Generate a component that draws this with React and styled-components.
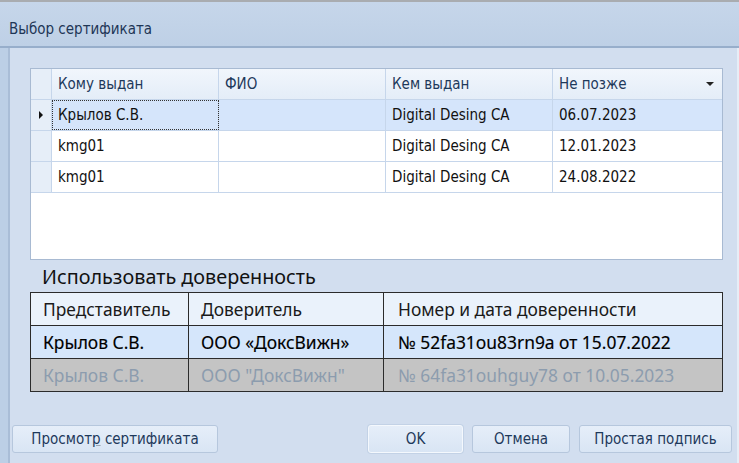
import React from "react";
import styled, { createGlobalStyle, css } from "styled-components";

const Global = createGlobalStyle`
  html, body { margin: 0; padding: 0; }
  body { width: 739px; height: 463px; overflow: hidden; background: #d2deef; }
  * { box-sizing: border-box; }
`;

const Window = styled.div`
  width: 739px;
  height: 463px;
  display: flex;
  flex-direction: column;
  background: #d2deef;
  font-family: "DejaVu Sans Condensed", "DejaVu Sans", sans-serif;
`;

const TopLine = styled.div`
  height: 2px;
  background: #a9acb0;
`;

const TitleBar = styled.div`
  height: 46px;
  flex-shrink: 0;
  display: flex;
  align-items: center;
  padding-left: 9px;
  padding-top: 10px;
  background: linear-gradient(#c6d6ea, #bed0e6);
  border-bottom: 2px solid #97aecb;
  font-size: 15px;
  color: #1e3656;
`;

const Body = styled.div`
  flex: 1;
  display: flex;
  min-width: 0;
`;

const LeftFrame = styled.div`
  flex: 0 0 10px;
  background: #bccfe6;
  border-right: 2px solid #a9bdd7;
`;

const Content = styled.div`
  flex: 1;
  min-width: 0;
  display: flex;
  flex-direction: column;
  padding: 20px 14px 0 20px;
  border-right: 2px solid #e6edf6;
`;

const Grid = styled.div`
  height: 192px;
  background: #fff;
  border: 1px solid #a8bad2;
  display: flex;
  flex-direction: column;
`;

const cols1 = "21px 167px 167px 167px 1fr";

const GridRow = styled.div`
  display: grid;
  grid-template-columns: ${cols1};
  height: 31px;
  flex-shrink: 0;
  background: ${(p) => (p.$head ? "linear-gradient(#f1f6fc, #e4edf8)" : p.$sel ? "#d5e5fb" : "#fff")};
  border-bottom: 1px solid #c6d6eb;
`;

const GridCell = styled.div`
  display: flex;
  align-items: center;
  padding-left: ${(p) => (p.$ind ? "0" : "6px")};
  justify-content: ${(p) => (p.$ind ? "center" : "flex-start")};
  border-right: 1px solid #c6d6eb;
  font-size: 15px;
  white-space: nowrap;
  color: ${(p) => (p.$head ? "#1e395b" : "#111")};
  background: ${(p) => (p.$ind ? "#e6eef8" : "transparent")};
  position: relative;
  ${(p) =>
    p.$focus &&
    css`
      outline: 1px dotted #333;
      outline-offset: -1px;
    `}
  &:last-child { border-right: none; }
`;

const SortArrow = styled.span`
  position: absolute;
  right: 8px;
  top: 13px;
  width: 0;
  height: 0;
  border-left: 4px solid transparent;
  border-right: 4px solid transparent;
  border-top: 4px solid #222;
`;

const RowMark = styled.span`
  width: 0;
  height: 0;
  border-top: 4px solid transparent;
  border-bottom: 4px solid transparent;
  border-left: 4px solid #111;
`;

const Caption = styled.div`
  font-family: "Noto Sans", sans-serif;
  font-size: 19.8px;
  color: #111;
  height: 32px;
  flex-shrink: 0;
  display: flex;
  align-items: center;
  padding-left: 12px;
`;

const cols2 = "158px 195px 1fr";

const Table2 = styled.div`
  border: 1px solid #2b2b2b;
  font-family: "Noto Sans", sans-serif;
  display: flex;
  flex-direction: column;
`;

const T2Row = styled.div`
  display: grid;
  grid-template-columns: ${cols2};
  height: ${(p) => p.$h}px;
  background: ${(p) => (p.$kind === "head" ? "#eaf2fb" : p.$kind === "sel" ? "#d5e6fb" : "#c4c4c4")};
  border-bottom: 1px solid #2b2b2b;
  &:last-child { border-bottom: none; }
`;

const T2Cell = styled.div`
  display: flex;
  align-items: center;
  padding-left: 12px;
  border-right: 1px solid #2b2b2b;
  font-size: 17.4px;
  color: ${(p) => (p.$kind === "dis" ? "#8c9cae" : p.$kind === "sel" ? "#000" : "#1a1a1a")};
  -webkit-text-stroke: ${(p) => (p.$kind === "sel" ? "0.15px #000" : "0")};
  white-space: nowrap;
  &:last-child { border-right: none; padding-left: 14px; }
`;

const Buttons = styled.div`
  display: flex;
  justify-content: space-between;
  margin-top: 33px;
  margin-left: -18px;
  margin-right: -9px;
`;

const ButtonGroup = styled.div`
  display: flex;
  gap: ${(p) => p.$gap}px;
`;

const Button = styled.button`
  height: 28px;
  width: ${(p) => p.$w}px;
  border-radius: 3px;
  border: 1px solid ${(p) => (p.$def ? "#f4f8fd" : "#b6c7dd")};
  background: linear-gradient(#e6eef9, #d9e5f4);
  font-family: "DejaVu Sans Condensed", "DejaVu Sans", sans-serif;
  font-size: 15px;
  color: #1e395b;
  padding: 0;
  box-shadow: ${(p) => (p.$def ? "0 0 0 1px #c3d2e6" : "none")};
`;

const Mn = styled.span`
  text-decoration: underline;
  text-decoration-color: #9aa6b4;
`;

const certs = [
  { who: "Крылов С.В.", by: "Digital Desing CA", date: "06.07.2023", sel: true },
  { who: "kmg01", by: "Digital Desing CA", date: "12.01.2023" },
  { who: "kmg01", by: "Digital Desing CA", date: "24.08.2022" },
];

export default function App() {
  return (
    <>
      <Global />
      <Window>
        <TopLine />
        <TitleBar>Выбор сертификата</TitleBar>
        <Body>
          <LeftFrame />
          <Content>
            <Grid>
              <GridRow $head>
                <GridCell $ind />
                <GridCell $head>Кому выдан</GridCell>
                <GridCell $head>ФИО</GridCell>
                <GridCell $head>Кем выдан</GridCell>
                <GridCell $head>
                  Не позже
                  <SortArrow />
                </GridCell>
              </GridRow>
              {certs.map((c, i) => (
                <GridRow key={i} $sel={c.sel}>
                  <GridCell $ind>{c.sel && <RowMark />}</GridCell>
                  <GridCell $focus={c.sel}>{c.who}</GridCell>
                  <GridCell />
                  <GridCell>{c.by}</GridCell>
                  <GridCell>{c.date}</GridCell>
                </GridRow>
              ))}
            </Grid>
            <Caption>Использовать доверенность</Caption>
            <Table2>
              <T2Row $kind="head" $h={33}>
                <T2Cell>Представитель</T2Cell>
                <T2Cell>Доверитель</T2Cell>
                <T2Cell>Номер и дата доверенности</T2Cell>
              </T2Row>
              <T2Row $kind="sel" $h={33}>
                <T2Cell $kind="sel">Крылов С.В.</T2Cell>
                <T2Cell $kind="sel">ООО «ДоксВижн»</T2Cell>
                <T2Cell $kind="sel">№ 52fa31ou83rn9a от 15.07.2022</T2Cell>
              </T2Row>
              <T2Row $kind="dis" $h={32}>
                <T2Cell $kind="dis">Крылов С.В.</T2Cell>
                <T2Cell $kind="dis">ООО "ДоксВижн"</T2Cell>
                <T2Cell $kind="dis">№ 64fa31ouhguy78 от 10.05.2023</T2Cell>
              </T2Row>
            </Table2>
            <Buttons>
              <Button $w={206}>
                Просмот<Mn>р</Mn> сертификата
              </Button>
              <ButtonGroup $gap={9}>
                <Button $w={95} $def>OK</Button>
                <Button $w={98}>Отмена</Button>
                <Button $w={153}>Простая подпись</Button>
              </ButtonGroup>
            </Buttons>
          </Content>
        </Body>
      </Window>
    </>
  );
}
